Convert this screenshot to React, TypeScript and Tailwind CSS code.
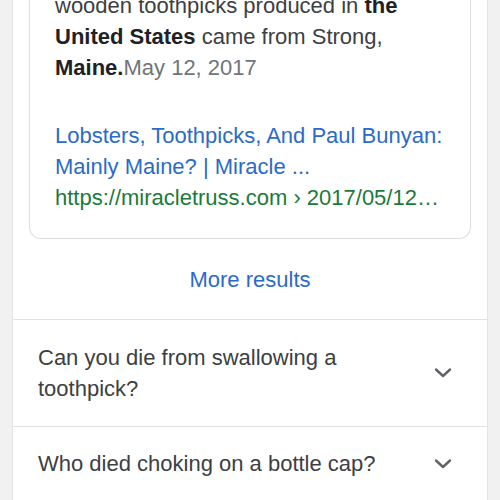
import React from "react";

function Chevron() {
  return (
    <svg width="20" height="12" viewBox="0 0 20 12" fill="none" className="shrink-0">
      <path d="M3 2.5 L10 9 L17 2.5" stroke="#5f6368" strokeWidth="2.4" strokeLinecap="round" strokeLinejoin="round" />
    </svg>
  );
}

export default function App() {
  return (
    <div
      className="w-[500px] h-[500px] overflow-hidden bg-[#f1f1f1] px-[12px]"
      style={{ fontFamily: '"Liberation Sans", Arial, sans-serif' }}
    >
      <div className="h-full bg-white border-x border-[#e4e4e4] flex flex-col">
        <div className="px-[16px]">
          <div className="border border-t-0 border-[#dedede] rounded-b-[12px] pl-[25px] pr-[16px] pb-[25px] mt-[-10px] text-[22px] leading-[31px] text-[#3c4043]">
            <p>
              wooden toothpicks produced in <b className="text-[#202124]">the</b>
              <br />
              <b className="text-[#202124]">United States</b> came from Strong,
              <br />
              <b className="text-[#202124]">Maine.</b>
              <span className="text-[#70757a]">May 12, 2017</span>
            </p>
            <div className="mt-[37px] text-[#2a6bc8] whitespace-nowrap">
              Lobsters, Toothpicks, And Paul Bunyan:
              <br />
              Mainly Maine? | Miracle ...
            </div>
            <div className="text-[#1b7a3a] whitespace-nowrap">https://miracletruss.com › 2017/05/12…</div>
          </div>
        </div>
        <div className="h-[83px] flex items-center justify-center text-[22px] text-[#2a6bc8] border-b border-[#e2e2e2]">
          More results
        </div>
        <div className="flex items-center justify-between pl-[25px] pr-[34px] py-[22px] border-b border-[#e2e2e2]">
          <div className="text-[22px] leading-[31px] text-[#3c4043]">
            Can you die from swallowing a
            <br />
            toothpick?
          </div>
          <Chevron />
        </div>
        <div className="flex items-center justify-between pl-[25px] pr-[34px] py-[21px]">
          <div className="text-[22px] leading-[31px] text-[#3c4043] whitespace-nowrap">Who died choking on a bottle cap?</div>
          <Chevron />
        </div>
      </div>
    </div>
  );
}
